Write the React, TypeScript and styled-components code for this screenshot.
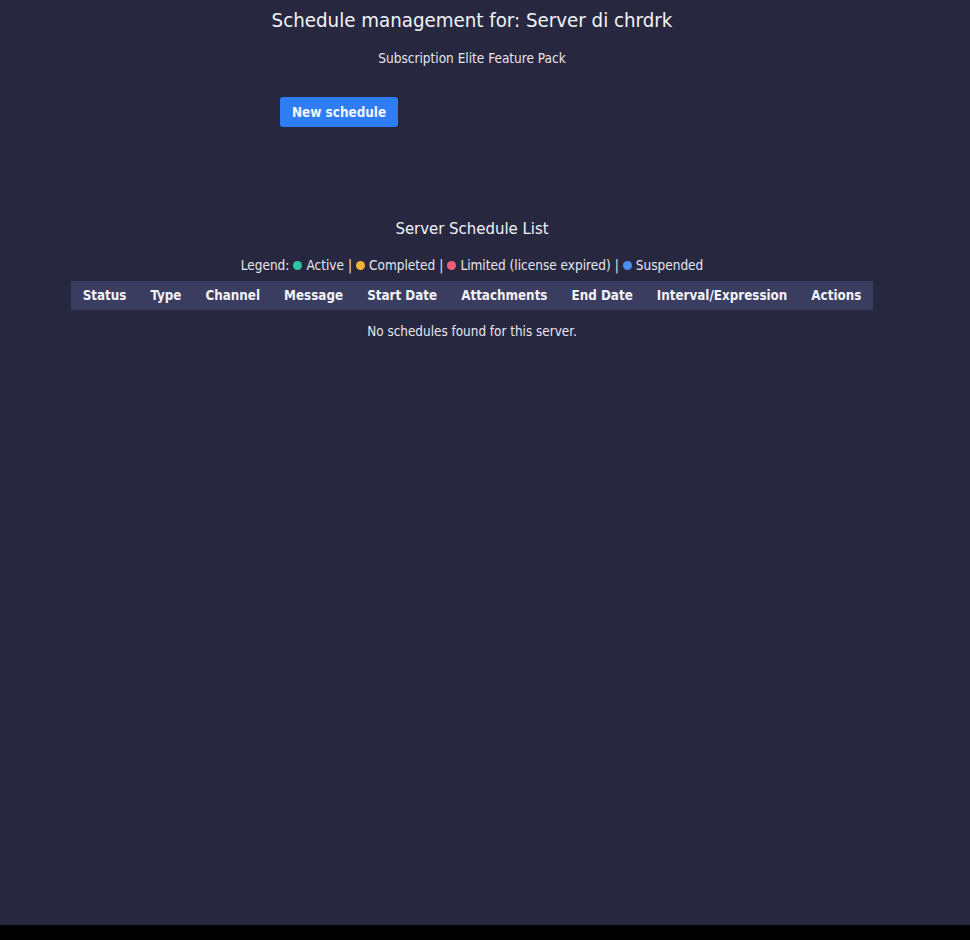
import React from "react";
import styled, { createGlobalStyle } from "styled-components";

const Global = createGlobalStyle`
  html, body { margin: 0; padding: 0; background: #000; }
  body { font-family: "DejaVu Sans Condensed", "DejaVu Sans", Verdana, sans-serif; font-stretch: condensed; color: #ececf4; }
`;

const Page = styled.div`
  height: 925px;
  background: #27283f;
  overflow: hidden;
`;

const Column = styled.div`
  width: 944px;
  display: flex;
  flex-direction: column;
  align-items: center;
`;

const Title = styled.h1`
  margin: 8px 0 0;
  font-size: 20.3px;
  line-height: 24px;
  font-weight: normal;
  color: #f2f2f8;
`;

const Subtitle = styled.p`
  margin: 18px 0 0;
  font-size: 13.5px;
  line-height: 16px;
  color: #e6e6ee;
`;

const ActionBar = styled.div`
  width: 384px;
  margin-top: 31px;
  display: flex;
  justify-content: flex-start;
`;

const PrimaryButton = styled.button`
  height: 30px;
  padding: 0 12px;
  border: none;
  border-radius: 3px;
  background: #2f7df5;
  color: #f4f6ff;
  font-family: inherit;
  font-stretch: inherit;
  font-size: 13.4px;
  font-weight: bold;
  cursor: pointer;
`;

const SectionTitle = styled.h2`
  margin: 92px 0 0;
  font-size: 16.6px;
  line-height: 19px;
  font-weight: normal;
  color: #f2f2f8;
`;

const Legend = styled.div`
  margin-top: 19px;
  font-size: 13.5px;
  line-height: 16px;
  display: flex;
  align-items: center;
  gap: 4px;
  color: #e6e6ee;
`;

const Dot = styled.span<{ $color: string }>`
  display: inline-block;
  width: 9px;
  height: 9px;
  border-radius: 50%;
  background: ${(p) => p.$color};
`;

const Table = styled.table`
  margin-top: 8px;
  border-collapse: collapse;
`;

const HeadCell = styled.th`
  background: #3a3c60;
  padding: 7px 12px;
  font-size: 13.3px;
  line-height: 15px;
  font-weight: bold;
  color: #f2f2f8;
  white-space: nowrap;
`;

const Empty = styled.p`
  margin: 14px 0 0;
  font-size: 13.4px;
  line-height: 16px;
  color: #e6e6ee;
`;

const columns = [
  "Status",
  "Type",
  "Channel",
  "Message",
  "Start Date",
  "Attachments",
  "End Date",
  "Interval/Expression",
  "Actions",
];

const legend = [
  { label: "Active", color: "#2ec4a4" },
  { label: "Completed", color: "#f2b233" },
  { label: "Limited (license expired)", color: "#ef6078" },
  { label: "Suspended", color: "#4a8ef2" },
];

export default function App() {
  return (
    <>
      <Global />
      <Page>
        <Column>
          <Title>Schedule management for: Server di chrdrk</Title>
          <Subtitle>Subscription Elite Feature Pack</Subtitle>
          <ActionBar>
            <PrimaryButton>New schedule</PrimaryButton>
          </ActionBar>
          <SectionTitle>Server Schedule List</SectionTitle>
          <Legend>
            <span>Legend:</span>
            {legend.map((l, i) => (
              <React.Fragment key={l.label}>
                <Dot $color={l.color} />
                <span>{l.label}</span>
                {i < legend.length - 1 && <span>|</span>}
              </React.Fragment>
            ))}
          </Legend>
          <Table>
            <thead>
              <tr>
                {columns.map((c) => (
                  <HeadCell key={c}>{c}</HeadCell>
                ))}
              </tr>
            </thead>
          </Table>
          <Empty>No schedules found for this server.</Empty>
        </Column>
      </Page>
    </>
  );
}
